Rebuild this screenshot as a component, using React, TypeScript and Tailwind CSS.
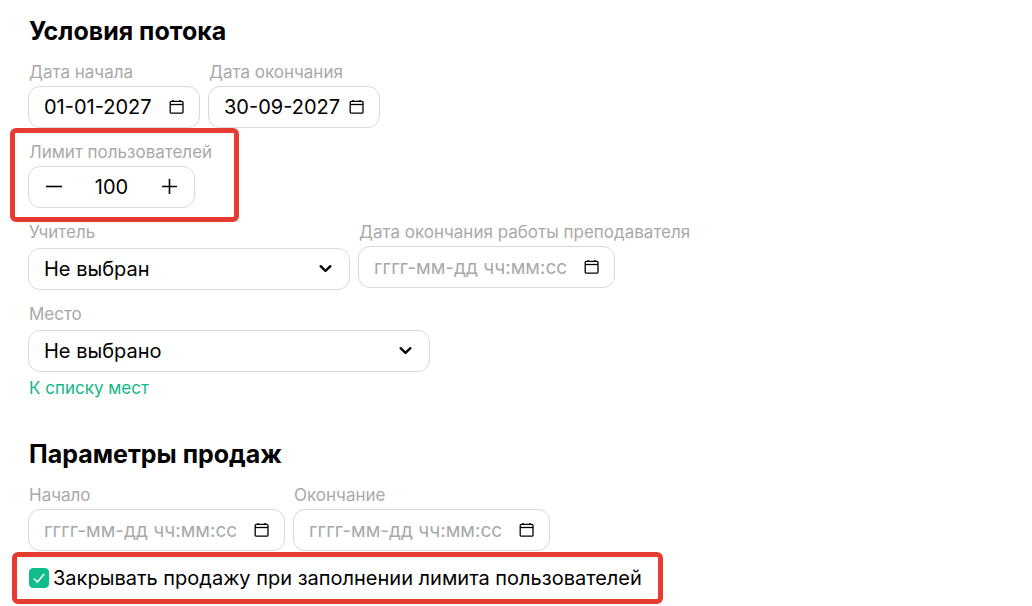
import { useState } from 'react';
import type { ReactNode } from 'react';

const labelClass = 'block px-px text-[17px] leading-6 text-[#a9a9a9]';
const boxClass = 'h-[42px] rounded-xl border border-[#d9d9d9] bg-white';
const headingClass = 'px-px text-[25px] leading-8 font-bold';

function CalendarIcon() {
  return (
    <svg className="h-4 w-4" viewBox="0 0 16 16" fill="none" stroke="currentColor" aria-hidden="true">
      <rect x="1.2" y="2.4" width="12.8" height="11.8" rx="1.2" strokeWidth="1.3" />
      <path d="M1.2 5.5h12.8" strokeWidth="1.3" />
      <path d="M4 1v1.4M11 1v1.4" strokeWidth="1.4" />
    </svg>
  );
}

// Red frame drawn around the settings that need attention
function Highlight({ className }: { className: string }) {
  return (
    <span
      aria-hidden="true"
      className={`pointer-events-none absolute rounded-md border-5 border-[#e53c32] ${className}`}
    />
  );
}

type DateFieldProps = {
  id: string;
  label: string;
  width: string;
  initial?: string;
  placeholder?: string;
};

function DateField({ id, label, width, initial = '', placeholder }: DateFieldProps) {
  const [value, setValue] = useState(initial);

  return (
    <div>
      <label htmlFor={id} className={labelClass}>{label}</label>
      <div className={`mt-0.5 flex items-center pr-[14px] pl-[15px] ${boxClass} ${width}`}>
        <input
          id={id}
          type="text"
          value={value}
          placeholder={placeholder}
          onChange={(e) => setValue(e.target.value)}
          className="w-full min-w-0 flex-1 bg-transparent text-xl outline-none placeholder:text-[19px] placeholder:text-[#a9a9a9]"
        />
        <button type="button" aria-label="Открыть календарь" className="shrink-0">
          <CalendarIcon />
        </button>
      </div>
    </div>
  );
}

type SelectFieldProps = {
  id: string;
  label: string;
  width: string;
  empty: string;
  children?: ReactNode;
};

function SelectField({ id, label, width, empty, children }: SelectFieldProps) {
  return (
    <div>
      <label htmlFor={id} className={labelClass}>{label}</label>
      <div className={`relative mt-1 max-w-full ${width}`}>
        <select id={id} className={`w-full appearance-none pr-10 pl-[15px] text-xl outline-none ${boxClass}`}>
          <option>{empty}</option>
        </select>
        <svg
          className="pointer-events-none absolute inset-y-0 right-4 my-auto h-4 w-4"
          viewBox="0 0 16 16"
          fill="none"
          stroke="currentColor"
          strokeWidth="2.4"
          strokeLinecap="round"
          strokeLinejoin="round"
          aria-hidden="true"
        >
          <path d="M2.6 5.2 7.5 9.8l4.9-4.6" />
        </svg>
      </div>
      {children}
    </div>
  );
}

function LimitField() {
  const [limit, setLimit] = useState('100');
  const step = (delta: number) => setLimit(String(Math.max(0, (Number(limit) || 0) + delta)));

  return (
    <div className="relative w-fit">
      <Highlight className="-top-3 -right-[26px] -bottom-3.5 -left-[18px]" />
      <label htmlFor="limit" className={labelClass}>Лимит пользователей</label>
      <div className={`mt-0.5 flex w-[167px] items-center justify-between px-4 ${boxClass}`}>
        <button type="button" aria-label="Уменьшить" onClick={() => step(-1)}>
          <svg className="h-[18px] w-[18px]" viewBox="0 0 18 18" stroke="currentColor" strokeWidth="1.6" aria-hidden="true">
            <path d="M1 8.5h16" />
          </svg>
        </button>
        <input
          id="limit"
          type="text"
          inputMode="numeric"
          value={limit}
          onChange={(e) => setLimit(e.target.value)}
          className="w-16 bg-transparent text-center text-xl outline-none"
        />
        <button type="button" aria-label="Увеличить" onClick={() => step(1)}>
          <svg className="h-[18px] w-[18px]" viewBox="0 0 18 18" stroke="currentColor" strokeWidth="1.6" aria-hidden="true">
            <path d="M2 8.5h15M9.5 1v15" />
          </svg>
        </button>
      </div>
    </div>
  );
}

export default function App() {
  const [closeOnLimit, setCloseOnLimit] = useState(true);

  return (
    <main className="min-h-screen bg-white px-7 pt-[15px] pb-3 font-['Inter','Noto_Sans',sans-serif] text-black">
      <section>
        <h2 className={headingClass}>Условия потока</h2>
        <div className="mt-[13px] flex flex-col gap-3">
          <div className="flex flex-wrap gap-2">
            <DateField id="start" label="Дата начала" width="w-[172px]" initial="01-01-2027" />
            <DateField id="end" label="Дата окончания" width="w-[172px]" initial="30-09-2027" />
          </div>
          <LimitField />
          <div className="flex flex-wrap gap-2">
            <SelectField id="teacher" label="Учитель" width="w-[322px]" empty="Не выбран" />
            <DateField
              id="teacher-end"
              label="Дата окончания работы преподавателя"
              width="w-[257px]"
              placeholder="гггг-мм-дд чч:мм:сс"
            />
          </div>
          <SelectField id="place" label="Место" width="w-[402px]" empty="Не выбрано">
            <a href="#places" className="mt-1 block w-fit px-px text-[17px] leading-6 text-[#12b886]">
              К списку мест
            </a>
          </SelectField>
        </div>
      </section>

      <section className="mt-[38px]">
        <h2 className={headingClass}>Параметры продаж</h2>
        <div className="mt-[13px] flex flex-wrap gap-2">
          <DateField id="sale-start" label="Начало" width="w-[257px]" placeholder="гггг-мм-дд чч:мм:сс" />
          <DateField id="sale-end" label="Окончание" width="w-[257px]" placeholder="гггг-мм-дд чч:мм:сс" />
        </div>
        <div className="relative mt-[13px] w-fit">
          <Highlight className="-top-3 -right-5 -bottom-3 -left-4" />
          <label className="flex items-center gap-1 px-px text-xl leading-7">
            <span className="grid h-5 w-5 shrink-0 place-items-center">
              <input
                type="checkbox"
                checked={closeOnLimit}
                onChange={(e) => setCloseOnLimit(e.target.checked)}
                className="col-start-1 row-start-1 h-5 w-5 appearance-none rounded border border-[#d9d9d9] checked:border-[#10bd8c] checked:bg-[#10bd8c]"
              />
              {closeOnLimit && (
                <svg
                  className="pointer-events-none z-10 col-start-1 row-start-1 h-5 w-5 text-white"
                  viewBox="0 0 20 20"
                  fill="none"
                  stroke="currentColor"
                  strokeWidth="1.5"
                  aria-hidden="true"
                >
                  <path d="m4.8 10.4 3.6 3.7 6.8-8" />
                </svg>
              )}
            </span>
            Закрывать продажу при заполнении лимита пользователей
          </label>
        </div>
      </section>
    </main>
  );
}
